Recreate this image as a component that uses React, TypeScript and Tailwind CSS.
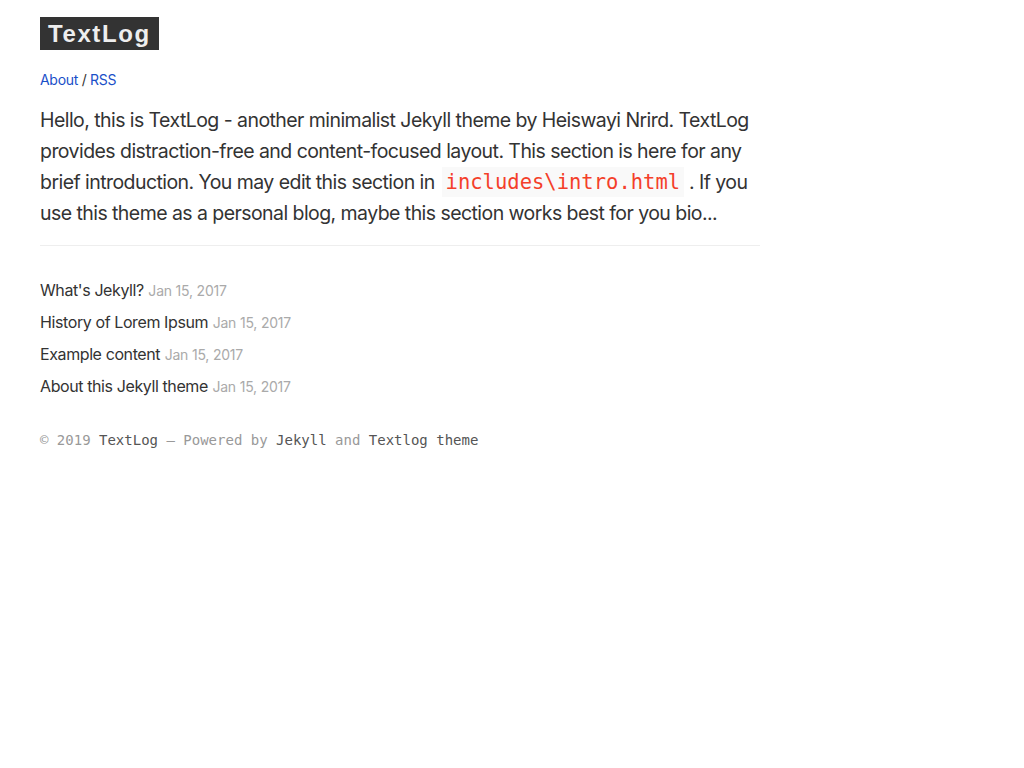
const posts = [
  { title: "What's Jekyll?", date: "Jan 15, 2017" },
  { title: "History of Lorem Ipsum", date: "Jan 15, 2017" },
  { title: "Example content", date: "Jan 15, 2017" },
  { title: "About this Jekyll theme", date: "Jan 15, 2017" },
];

export default function App() {
  return (
    <div className="min-h-screen bg-white px-10 text-[#333] font-['Inter',sans-serif]">
      <div className="w-[720px]">
        <header className="pt-[17px]">
          <a className="inline-block bg-[#333] px-2 h-[33px] leading-[34px] text-[24px] font-bold tracking-[1.6px] text-[#eee] font-['Liberation_Sans',sans-serif]">
            TextLog
          </a>
          <nav className="mt-[20px] text-[14px] leading-[20px] tracking-[-0.3px]">
            <a className="text-[#1a4fc8]">About</a>
            <span> / </span>
            <a className="text-[#1a4fc8]">RSS</a>
          </nav>
        </header>

        <div className="mt-[15px] pb-[16px] border-b border-[#eee] text-[19.5px] leading-[31px] tracking-[-0.56px]">
          Hello, this is TextLog - another minimalist Jekyll theme by Heiswayi Nrird. TextLog
          provides distraction-free and content-focused layout. This section is here for any
          brief introduction. You may edit this section in{" "}
          <code className="ml-[2px] bg-[#f9f9f9] px-[4px] py-[3px] text-[20.5px] leading-none tracking-normal text-[#f43f2a] font-['DejaVu_Sans_Mono',monospace]">
            includes\intro.html
          </code>{" "}
          . If you use this theme as a personal blog, maybe this section works best for you bio...
        </div>

        <ul className="mt-[32px] flex flex-col">
          {posts.map((p, i) => (
            <li key={i} className="h-[32px] leading-[24px]">
              <a className="text-[16px] text-[#333] tracking-[-0.4px]">{p.title}</a>{" "}
              <span className="text-[14px] text-[#aaa] tracking-[-0.2px]">{p.date}</span>
            </li>
          ))}
        </ul>

        <footer className="mt-[24px] text-[14px] leading-[20px] text-[#999] font-['DejaVu_Sans_Mono',monospace]">
          © 2019 <a className="text-[#555]">TextLog</a> — Powered by{" "}
          <a className="text-[#555]">Jekyll</a> and <a className="text-[#555]">Textlog theme</a>
        </footer>
      </div>
    </div>
  );
}
